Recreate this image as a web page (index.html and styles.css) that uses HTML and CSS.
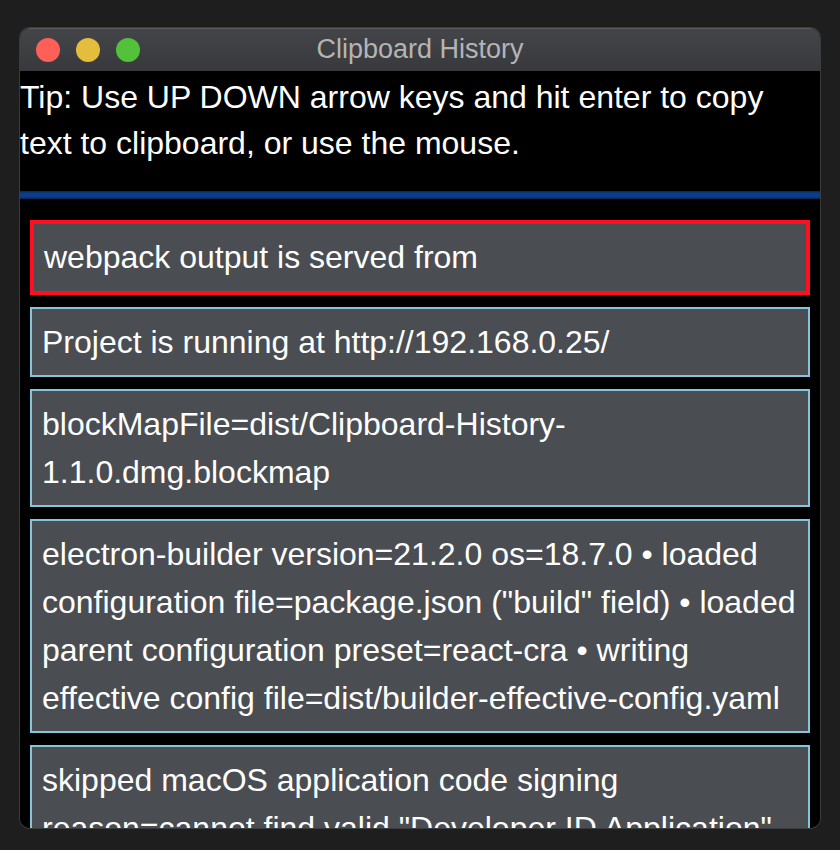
FILE: index.html
```html
<!DOCTYPE html>
<html>
<head>
<meta charset="utf-8">
<link rel="stylesheet" href="styles.css">
</head>
<body>
<div class="window">
  <div class="titlebar">
    <div class="lights">
      <span class="light red"></span>
      <span class="light yellow"></span>
      <span class="light green"></span>
    </div>
    <div class="title">Clipboard History</div>
  </div>
  <div class="content">
    <div class="tip">Tip: Use UP DOWN arrow keys and hit enter to copy text to clipboard, or use the mouse.</div>
    <div class="divider"></div>
    <div class="list">
      <div class="item selected">webpack output is served from</div>
      <div class="item">Project is running at http://192.168.0.25/</div>
      <div class="item">blockMapFile=dist/Clipboard-History-1.1.0.dmg.blockmap</div>
      <div class="item">electron-builder version=21.2.0 os=18.7.0 • loaded configuration file=package.json ("build" field) • loaded parent configuration preset=react-cra • writing effective config file=dist/builder-effective-config.yaml</div>
      <div class="item">skipped macOS application code signing reason=cannot find valid "Developer ID Application" identity or custom non-Apple code signing certificate</div>
    </div>
  </div>
</div>
</body>
</html>
```
FILE: styles.css
```css
html, body {
  margin: 0;
  padding: 0;
  background: #1e1e1e;
  height: 850px;
  overflow: hidden;
}
body {
  padding-top: 28px;
  padding-left: 20px;
  font-family: "Liberation Sans", Arial, sans-serif;
}
.window {
  width: 800px;
  height: 800px;
  border-radius: 10px;
  overflow: hidden;
  background: #000;
  box-shadow: 0 0 0 1px #3a3b3d;
  display: flex;
  flex-direction: column;
}
.titlebar {
  height: 43px;
  flex: none;
  background: linear-gradient(#444548, #38393c);
  border-top: 1px solid #5a5b5e;
  box-sizing: border-box;
  display: flex;
  align-items: center;
  position: relative;
}
.lights {
  display: flex;
  gap: 16px;
  padding-left: 16px;
}
.light {
  width: 24px;
  height: 24px;
  border-radius: 50%;
  display: block;
}
.red { background: #fe5f57; }
.yellow { background: #e5bd3d; }
.green { background: #54c13b; }
.title {
  position: absolute;
  left: 0;
  right: 0;
  text-align: center;
  color: #b4b4b6;
  font-size: 27px;
  top: 5px;
}
.content {
  flex: 1;
  overflow: hidden;
  background: #000;
}
.tip {
  color: #fff;
  font-size: 32px;
  line-height: 46px;
  padding: 3px 0 0 0;
  height: 120px;
  box-sizing: border-box;
}
.divider {
  height: 8px;
  background: linear-gradient(#0c2a58 0, #0c2a58 1px, #0a3e8c 2px, #0a3e8c 6px, #0c2a58 7px);
}
.list {
  padding: 21px 10px 0 10px;
  display: flex;
  flex-direction: column;
  gap: 12px;
}
.item {
  background: #4a4d51;
  border: 2px solid #86c6dc;
  color: #fff;
  font-size: 32px;
  line-height: 48px;
  padding: 9px 10px 9px;
}
.item.selected {
  border: 4px solid #ff1020;
  padding: 9px 10px 10px;
}
```
